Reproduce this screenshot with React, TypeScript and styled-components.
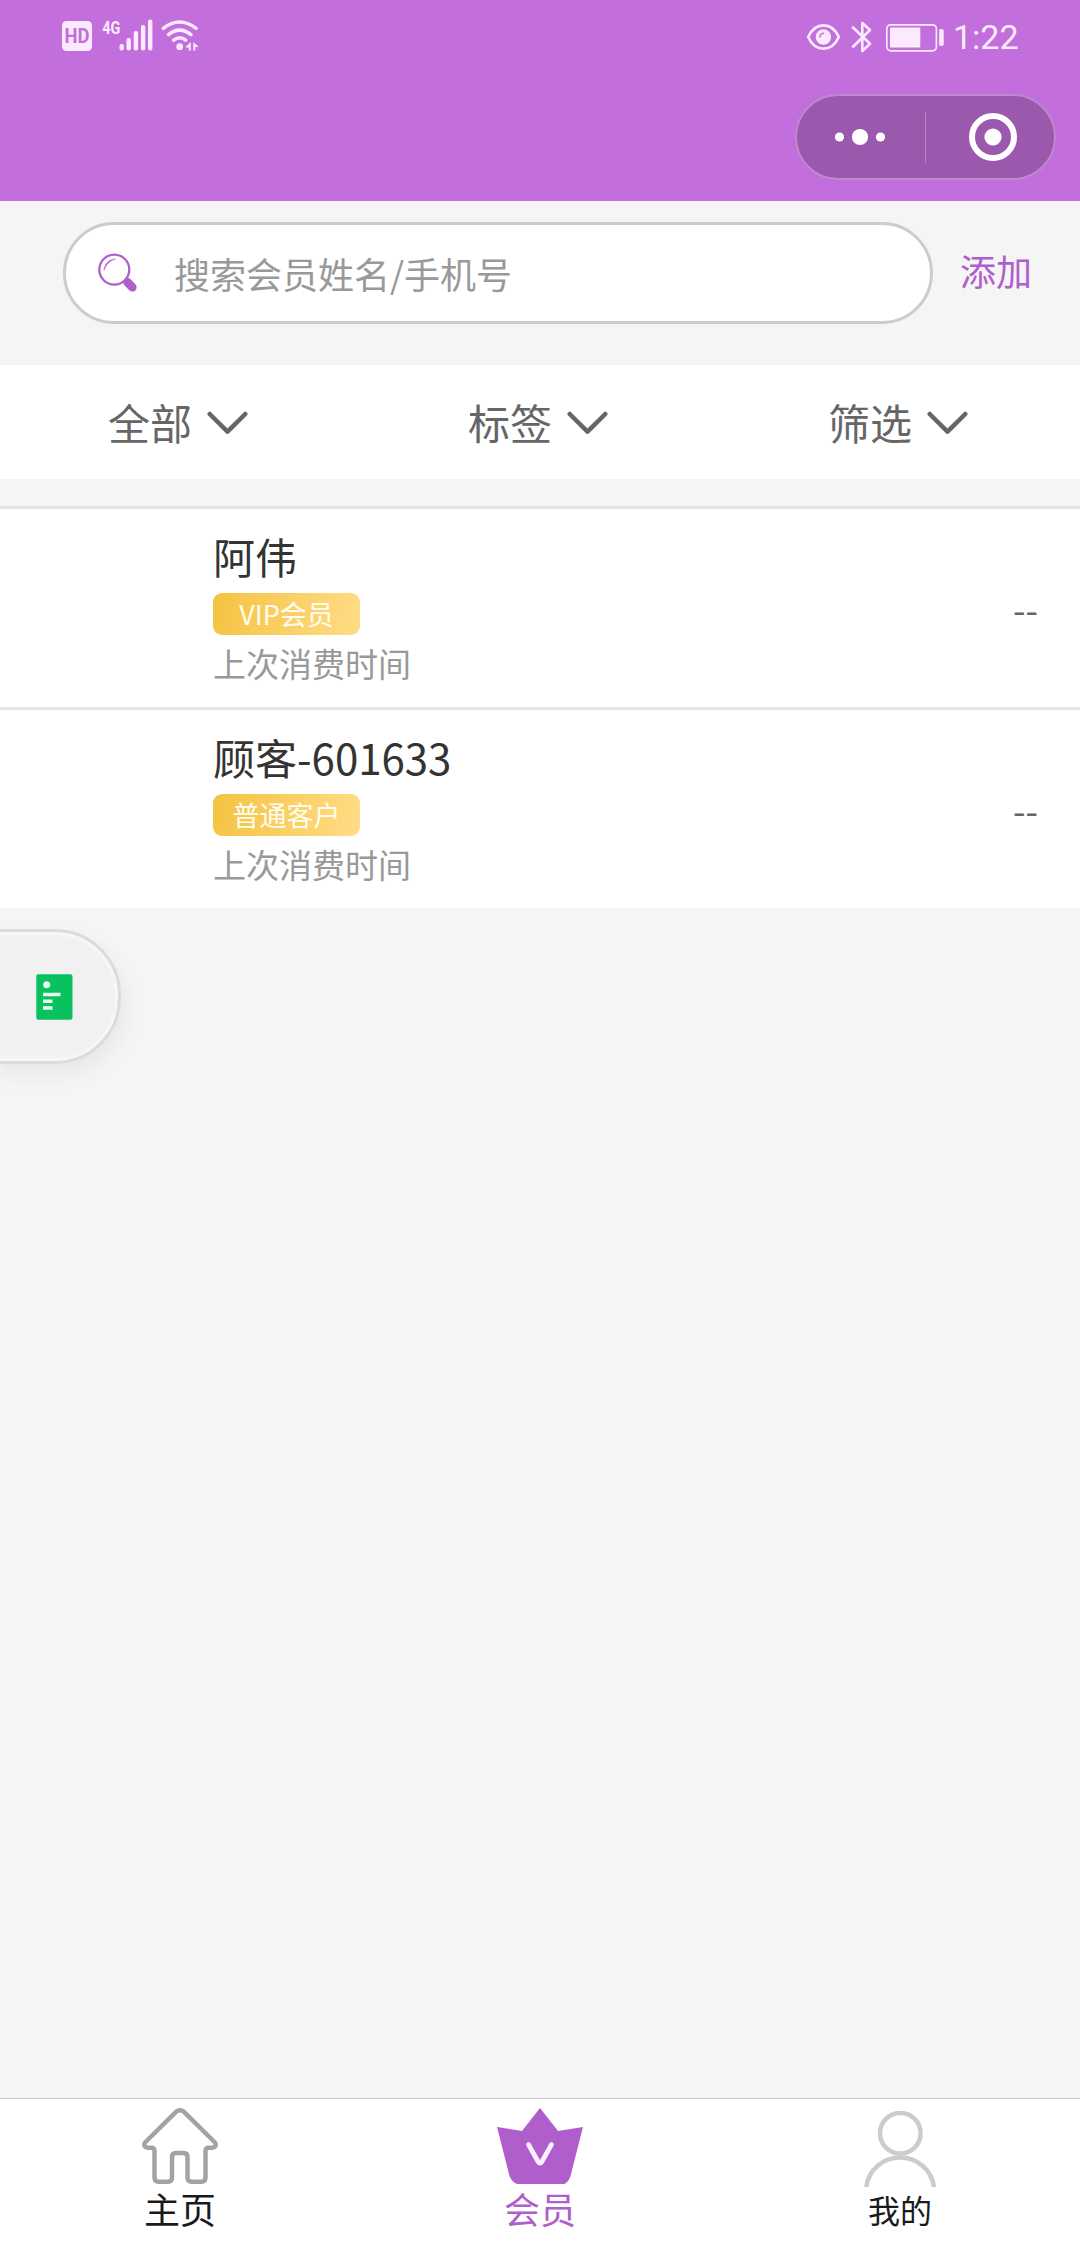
import React from 'react';
import styled, { createGlobalStyle } from 'styled-components';

const GlobalStyle = createGlobalStyle`
  *, *::before, *::after { box-sizing: border-box; }
  body {
    margin: 0;
    background: #f5f5f5;
    font-family: "Noto Sans CJK SC", "Noto Sans", sans-serif;
    font-weight: 400;
  }
  svg { display: block; flex: none; }
`;

const Screen = styled.div`
  position: relative;
  display: flex;
  flex-direction: column;
  width: 1080px;
  height: 2244px;
  overflow: hidden;
  background: #f5f5f5;
`;

const Header = styled.header`
  display: flex;
  flex-direction: column;
  height: 201px;
  flex: none;
  background: #c26edc;
`;

const StatusBar = styled.div`
  display: flex;
  justify-content: space-between;
  height: 74px;
  padding: 0 62px;
  color: #fbeafd;
`;

const StatusGroup = styled.div`
  display: flex;
  align-items: center;
`;

const Clock = styled.span`
  width: 65px;
  margin-left: 9px;
  font: 400 34px/40px Roboto, sans-serif;
  white-space: nowrap;
`;

const Capsule = styled.div`
  display: flex;
  align-items: center;
  align-self: flex-end;
  width: 261px;
  height: 86px;
  margin: 20px 24px 0 0;
  border: 2px solid #bd88cf;
  border-radius: 43px;
  background: #9b59ae;
`;

const CapsuleButton = styled.button<{ $nudge: number }>`
  display: flex;
  flex: 0 0 128px;
  align-items: center;
  justify-content: center;
  padding: 0;
  padding-left: ${(p) => Math.max(p.$nudge, 0)}px;
  padding-right: ${(p) => Math.max(-p.$nudge, 0)}px;
  border: 0;
  background: none;
`;

const CapsuleDivider = styled.div`
  width: 1px;
  height: 51px;
  background: #b683c6;
`;

const SearchBar = styled.div`
  display: flex;
  align-items: center;
  height: 164px;
  flex: none;
  padding: 0 48px 20px 63px;
`;

const SearchField = styled.div`
  display: flex;
  align-items: center;
  width: 870px;
  height: 102px;
  flex: none;
  padding-left: 32px;
  border: 3px solid #ccc;
  border-radius: 51px;
  background: #fff;
`;

const Placeholder = styled.span`
  margin-left: 36px;
  color: #999;
  font-size: 36px;
  line-height: 52px;
`;

const AddLink = styled.a`
  margin: 0 0 6px 27px;
  color: #b05ecb;
  font-size: 36px;
  line-height: 52px;
  white-space: nowrap;
`;

const Filters = styled.div`
  display: grid;
  grid-template-columns: repeat(3, 1fr);
  height: 114px;
  flex: none;
  background: #fff;
`;

const Filter = styled.div`
  display: flex;
  align-items: center;
  gap: 15px;
  padding: 0 0 0 108px;
  color: #666;
  font-size: 42px;
  line-height: 60px;
`;

const MemberList = styled.main`
  flex: 1;
  padding-top: 27px;
`;

const MemberRow = styled.article`
  display: flex;
  align-items: center;
  justify-content: space-between;
  height: 201px;
  padding: 0 42px 0 213px;
  border-top: 3px solid #e5e5e5;
  background: #fff;
`;

const MemberInfo = styled.div`
  display: flex;
  flex-direction: column;
  align-items: flex-start;
  padding-bottom: 2px;
`;

const MemberName = styled.div`
  color: #333;
  font-size: 42px;
  line-height: 58px;
`;

const Badge = styled.div`
  display: flex;
  align-items: center;
  justify-content: center;
  width: 147px;
  height: 42px;
  margin: 8px 0 4px;
  padding-bottom: 1px;
  border-radius: 9px;
  background: linear-gradient(100deg, #f5c342, #ffdc86);
  color: #fffdf0;
  font-size: 27px;
  line-height: 40px;
`;

const LastVisit = styled.div`
  color: #999;
  font-size: 33px;
  line-height: 48px;
`;

const Amount = styled.div`
  color: #666;
  font-size: 36px;
  line-height: 52px;
`;

const FloatingButton = styled.button`
  position: absolute;
  left: -6px;
  top: 929px;
  display: flex;
  align-items: center;
  width: 127px;
  height: 135px;
  padding: 0 0 0 39px;
  border: 3px solid #dcdcdc;
  border-radius: 0 66px 66px 0;
  background: #f1f1f1;
  box-shadow: inset 0 0 3px 3px #f8f8f8, 4px 10px 22px rgba(0, 0, 0, 0.06);
`;

const TabBar = styled.nav`
  display: grid;
  grid-template-columns: repeat(3, 1fr);
  height: 146px;
  flex: none;
  border-top: 1px solid #c8c8c8;
  background: #fff;
`;

const Tab = styled.a<{ $active?: boolean; $small?: boolean }>`
  display: flex;
  flex-direction: column;
  align-items: center;
  padding-top: ${(p) => (p.$small ? 12 : 9)}px;
  color: ${(p) => (p.$active ? '#b05ecb' : '#1a1a1a')};
  font-size: ${(p) => (p.$small ? 32 : 36)}px;
  line-height: 52px;
  span { margin-top: ${(p) => (p.$small ? -4 : -2)}px; }
`;

const NetworkIcons = () => (
  <svg width="138" height="40" viewBox="62 18 138 40" fill="currentColor">
    <rect x="62" y="22" width="30" height="30" rx="4.5" />
    <text x="77" y="44" textAnchor="middle" fontFamily="Roboto" fontWeight="700" fontSize="19.7" textLength="25" lengthAdjust="spacingAndGlyphs" fill="#c26edc">HD</text>
    <text x="102.3" y="34.6" fontFamily="Roboto" fontWeight="700" fontSize="19" textLength="18" lengthAdjust="spacingAndGlyphs">4G</text>
    <rect x="119.5" y="45" width="4.4" height="6.5" rx="2" />
    <rect x="126.5" y="39" width="4.4" height="12.5" rx="2" />
    <rect x="133.7" y="32" width="4.4" height="19.5" rx="2" />
    <rect x="140.9" y="26" width="4.4" height="25.5" rx="2" />
    <rect x="148" y="20.5" width="4.4" height="31" rx="2" />
    <g fill="none" stroke="currentColor" strokeWidth="3.5" strokeLinecap="round">
      <path d="M163.3 29.3q16.3-12.6 32.8 0M168.5 35.6q11.2-9 22.4 0M173.7 41.2q6-5 12 0" />
    </g>
    <circle cx="179.7" cy="47.7" r="3.4" />
    <path d="M190.8 43v8.6h-2v-3.1h-3.6zM193.3 43l5.4 5h-3.4v3.6h-2z" />
  </svg>
);

const DeviceIcons = () => (
  <svg width="138" height="40" viewBox="806 16 138 40" fill="none" stroke="currentColor">
    <path d="M808.2 36C815 20.5 832 20.5 838.8 36 832 51.5 815 51.5 808.2 36z" strokeWidth="2.7" strokeLinejoin="round" />
    <circle cx="823.4" cy="36" r="7.7" fill="currentColor" stroke="none" />
    <path d="M820 36q0-3.6 3.5-3.8" stroke="#c26edc" strokeWidth="1.5" strokeLinecap="round" />
    <path d="M853 26.5l17 16.3-7.7 7.2V22l7.7 7-17 16.7" strokeWidth="2.6" strokeLinecap="round" strokeLinejoin="round" />
    <rect x="886.8" y="23.8" width="49.6" height="26" rx="4" strokeWidth="1.7" />
    <rect x="890" y="26.5" width="30.3" height="20" rx="1" fill="currentColor" stroke="none" />
    <rect x="939.2" y="28" width="4.5" height="17" rx="1.8" fill="currentColor" stroke="none" />
  </svg>
);

const MoreIcon = () => (
  <svg width="52" height="18" viewBox="0 0 52 18" fill="#fff">
    <circle cx="5.5" cy="9" r="4.6" />
    <circle cx="26" cy="9" r="8.1" />
    <circle cx="46.5" cy="9" r="4.6" />
  </svg>
);

const TargetIcon = () => (
  <svg width="48" height="48" viewBox="0 0 48 48">
    <circle cx="24" cy="24" r="21" fill="none" stroke="#fff" strokeWidth="6" />
    <circle cx="24" cy="24" r="8.6" fill="#fff" />
  </svg>
);

const SearchIcon = () => (
  <svg width="40" height="40" viewBox="0 0 40 40" fill="none" stroke="#b05ecb">
    <circle cx="16.3" cy="16.6" r="15" strokeWidth="2.3" />
    <path d="M6 17.5C6.5 11 10.5 6.5 17.5 5.8 11.5 8 8 11.5 6 17.5z" fill="#b05ecb" strokeWidth=".5" />
    <path d="M26.5 26.5l2 2" strokeWidth="3" />
    <path d="M29.5 29.3l4.8 5" strokeWidth="8.6" strokeLinecap="round" />
  </svg>
);

const Chevron = styled.svg`
  margin-top: 1px;
`;

const ChevronIcon = () => (
  <Chevron width="41" height="24" viewBox="0 0 41 24">
    <path d="M2.7 3l17.8 17.7L38.3 3" fill="none" stroke="#666" strokeWidth="4.5" strokeLinecap="round" strokeLinejoin="round" />
  </Chevron>
);

const NoteIcon = () => (
  <svg width="37" height="46" viewBox="0 0 37 46">
    <rect x=".3" y=".3" width="36.2" height="45.4" rx="2" fill="#0ac160" />
    <g fill="#e4faed">
      <circle cx="10.7" cy="10.8" r="3.5" />
      <path d="M7 18.7h17.5v3.5H7zM7 25.5h9.5v3.5H7zM7 32.3h9.5v3.5H7z" />
    </g>
  </svg>
);

const HomeIcon = () => (
  <svg width="76" height="76" viewBox="0 0 76 76">
    <path d="M34 3.8Q38 .8 42 3.8L73 34.5q2.5 5-3.5 5.2h-2.5Q63.5 39.7 63.5 43v26.5q0 4.2-4 4.2H49.5q-4 0-4-4.2V49q0-4-4-4H34q-4 0-4 4v20.5q0 4.2-4 4.2H16.5q-4 0-4-4.2V43q0-3.3-3.5-3.3h-2.5Q.5 39.5 3 34.5z" fill="none" stroke="#a3a3a3" strokeWidth="4.5" strokeLinejoin="round" />
  </svg>
);

const CrownIcon = () => (
  <svg width="86" height="76" viewBox="0 0 86 76">
    <path d="M43 0l18 23 25-4-12.5 49q-1.5 5-6 8H20q-6-3-7.500-8L0 19l25 4z" fill="#b05ecb" />
    <path d="M31.5 36.5l9.500 17q2 3.500 4 0l9.500-17" fill="none" stroke="#fbeeff" strokeWidth="4.7" strokeLinecap="round" strokeLinejoin="round" />
  </svg>
);

const UserIcon = () => (
  <svg width="72" height="76" viewBox="0 0 72 76" fill="none" stroke="#ccc" strokeWidth="4.5">
    <circle cx="36.3" cy="22.3" r="20.3" />
    <path d="M2.3 76A34 33 0 0 1 69.9 76" />
  </svg>
);

const filters = ['全部', '标签', '筛选'];

const members = [
  { name: '阿伟', level: 'VIP会员' },
  { name: '顾客-601633', level: '普通客户' },
];

export default function App() {
  return (
    <Screen>
      <GlobalStyle />
      <Header>
        <StatusBar>
          <StatusGroup><NetworkIcons /></StatusGroup>
          <StatusGroup>
            <DeviceIcons />
            <Clock>1:22</Clock>
          </StatusGroup>
        </StatusBar>
        <Capsule>
          <CapsuleButton $nudge={-2}><MoreIcon /></CapsuleButton>
          <CapsuleDivider />
          <CapsuleButton $nudge={6}><TargetIcon /></CapsuleButton>
        </Capsule>
      </Header>
      <SearchBar>
        <SearchField>
          <SearchIcon />
          <Placeholder>搜索会员姓名/手机号</Placeholder>
        </SearchField>
        <AddLink>添加</AddLink>
      </SearchBar>
      <Filters>
        {filters.map((label) => (
          <Filter key={label}>
            <span>{label}</span>
            <ChevronIcon />
          </Filter>
        ))}
      </Filters>
      <MemberList>
        {members.map((member) => (
          <MemberRow key={member.name}>
            <MemberInfo>
              <MemberName>{member.name}</MemberName>
              <Badge>{member.level}</Badge>
              <LastVisit>上次消费时间</LastVisit>
            </MemberInfo>
            <Amount>--</Amount>
          </MemberRow>
        ))}
      </MemberList>
      <TabBar>
        <Tab><HomeIcon /><span>主页</span></Tab>
        <Tab $active><CrownIcon /><span>会员</span></Tab>
        <Tab $small><UserIcon /><span>我的</span></Tab>
      </TabBar>
      <FloatingButton aria-label="note"><NoteIcon /></FloatingButton>
    </Screen>
  );
}
